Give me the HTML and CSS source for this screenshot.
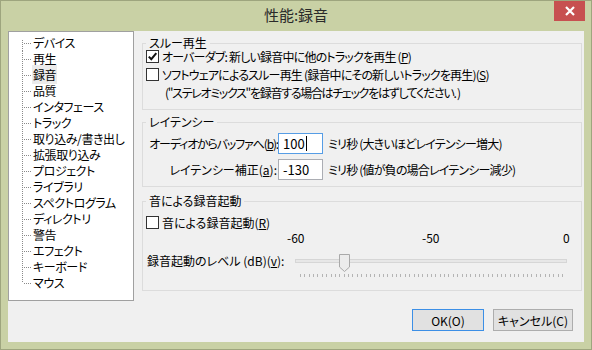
FILE: index.html
```html
<!DOCTYPE html>
<html lang="ja">
<head>
<meta charset="utf-8">
<title>性能:録音</title>
<link rel="stylesheet" href="styles.css">
</head>
<body>
<div class="window">
  <div class="titlebar">
    <div class="title">性能:録音</div>
    <div class="close"><svg width="10" height="10" viewBox="0 0 10 10"><path d="M1 1L9 9M9 1L1 9" stroke="#fff" stroke-width="2.2"/></svg></div>
  </div>
  <div class="client">
    <div class="main">
      <ul class="tree">
        <li>デバイス</li>
        <li>再生</li>
        <li><span class="sel">録音</span></li>
        <li>品質</li>
        <li>インタフェース</li>
        <li>トラック</li>
        <li>取り込み/書き出し</li>
        <li>拡張取り込み</li>
        <li>プロジェクト</li>
        <li>ライブラリ</li>
        <li>スペクトログラム</li>
        <li>ディレクトリ</li>
        <li>警告</li>
        <li>エフェクト</li>
        <li>キーボード</li>
        <li>マウス</li>
      </ul>
      <div class="pane">
        <fieldset class="group g1">
          <legend>スルー再生</legend>
          <div class="rows">
            <div class="row long"><span class="cb"><svg width="11" height="11" viewBox="0 0 11 11"><path d="M1.8 5.6L4.3 8.2L9.3 2.2" fill="none" stroke="#111" stroke-width="2"/></svg></span>オーバーダブ: 新しい録音中に他のトラックを再生 (<u>P</u>)</div>
            <div class="row long"><span class="cb"></span>ソフトウェアによるスルー再生 (録音中にその新しいトラックを再生)(<u>S</u>)</div>
            <div class="row note">("ステレオミックス"を録音する場合はチェックをはずしてください. )</div>
          </div>
        </fieldset>
        <fieldset class="group g2">
          <legend>レイテンシー</legend>
          <div class="field">
            <span class="flabel tight">オーディオからバッファへ(<u>b</u>):</span>
            <span class="box focus">100<span class="caret"></span></span>
            <span class="after">ミリ秒 (大きいほどレイテンシー増大)</span>
          </div>
          <div class="field">
            <span class="flabel">レイテンシー補正(<u>a</u>):</span>
            <span class="box">-130</span>
            <span class="after">ミリ秒 (値が負の場合レイテンシー減少)</span>
          </div>
        </fieldset>
        <fieldset class="group g3">
          <legend>音による録音起動</legend>
          <div class="row"><span class="cb"></span>音による録音起動(<u>R</u>)</div>
          <div class="scale"><span class="s1">-60</span><span class="s2">-50</span><span>0</span></div>
          <div class="sliderrow">
            <span class="slabel">録音起動のレベル (dB)(<u>v</u>):</span>
            <div class="slider">
              <div class="track"></div>
              <div class="ticks"></div>
              <svg class="thumb" width="11" height="18" viewBox="0 0 11 18"><path d="M0.5 0.5H10.5V13L5.5 17.5L0.5 13Z" fill="#ececec" stroke="#a9a9a9"/></svg>
            </div>
          </div>
        </fieldset>
      </div>
    </div>
    <div class="actions">
      <div class="btn default">OK(O)</div>
      <div class="btn cancel">キャンセル(C)</div>
    </div>
  </div>
</div>
</body>
</html>
```
FILE: styles.css
```css
html, body {
  margin: 0;
  padding: 0;
  background: #c9d1a5;
}
body {
  font-family: "Noto Sans CJK JP", "Noto Sans", sans-serif;
  font-size: 12px;
  color: #000;
  font-feature-settings: "palt";
}
.window {
  width: 590px;
  height: 348px;
  border: 1px solid #9ea57e;
  background: #c9d1a5;
  position: relative;
}
.titlebar {
  height: 30px;
  display: flex;
  justify-content: center;
  align-items: center;
  box-sizing: border-box;
  padding-bottom: 2px;
}
.title {
  font-size: 15px;
  color: #2a2a2a;
  line-height: 18px;
}
.close {
  position: absolute;
  top: 0;
  right: 6px;
  width: 31px;
  height: 20px;
  background: #c75050;
  display: flex;
  align-items: center;
  justify-content: center;
}
.client {
  margin-left: 7px;
  width: 576px;
  height: 311px;
  background: #f0f0f0;
  display: flex;
  flex-direction: column;
}
.main {
  display: flex;
  height: 270px;
}
.tree {
  width: 124px;
  height: 265px;
  margin: 0;
  padding: 3px 0 0 0;
  list-style: none;
  border: 1px solid #a0a0a0;
  background: #fff;
}
.tree li {
  position: relative;
  height: 16px;
  line-height: 16px;
  padding-left: 24px;
  white-space: nowrap;
  letter-spacing: -0.4px;
}
.tree li::before {
  content: "";
  position: absolute;
  left: 13px;
  top: 0;
  bottom: 0;
  width: 1px;
  background: repeating-linear-gradient(to bottom, #8a8a8a 0 1px, transparent 1px 2px);
}
.tree li:first-child::before { top: 5px; }
.tree li:last-child::before { bottom: 8px; }
.tree li::after {
  content: "";
  position: absolute;
  left: 15px;
  top: 8px;
  width: 8px;
  height: 1px;
  background: repeating-linear-gradient(to right, #8a8a8a 0 1px, transparent 1px 2px);
}
.sel {
  background: #ebebeb;
  margin-left: -1px;
  padding: 1px 1px;
}
.pane {
  padding: 5px 0 0 8px;
  width: 440px;
  display: flex;
  flex-direction: column;
}
.group {
  margin: 0;
  min-width: 0;
  border: 1px solid #dcdcdc;
  padding: 0 6px 8px 3px;
}
.group legend {
  padding: 0 3px;
  margin-left: 0;
  line-height: 14px;
  height: 14px;
}
.g2 { margin-top: 5px; padding-top: 4px; padding-bottom: 6px; }
.g3 { margin-top: 7px; padding-top: 5px; padding-bottom: 10px; }
.rows { margin-top: -3px; }
.row {
  height: 18px;
  display: flex;
  align-items: center;
  white-space: nowrap;
}
.row.long { letter-spacing: -0.8px; }
.note { padding-left: 19px; letter-spacing: -1.3px; }
.cb {
  width: 11px;
  height: 11px;
  border: 1px solid #333;
  background: #fff;
  margin-right: 3px;
  display: flex;
  align-items: center;
  justify-content: center;
  flex: none;
}
.field {
  display: flex;
  align-items: center;
  height: 21px;
  white-space: nowrap;
}
.field + .field { margin-top: 5px; }
.flabel {
  width: 132px;
  text-align: right;
  flex: none;
  padding-right: 1px;
  box-sizing: border-box;
}
.flabel.tight {
  letter-spacing: -1.15px;
  padding-right: 0;
}
.box {
  width: 45px;
  height: 21px;
  box-sizing: border-box;
  border: 1px solid #abadb3;
  background: #fff;
  padding-left: 4px;
  display: flex;
  align-items: center;
  font-size: 13px;
}
.box.focus { border-color: #569de5; }
.caret {
  width: 1px;
  height: 15px;
  background: #000;
  margin-left: 1px;
}
.after { margin-left: 5px; letter-spacing: -0.8px; }
.scale {
  display: flex;
  height: 14px;
  line-height: 14px;
  padding-left: 141px;
}
.s1 { width: 135px; flex: none; }
.s2 { width: 141px; flex: none; }
.sliderrow {
  display: flex;
  margin-top: 7px;
  height: 28px;
}
.slabel {
  width: 148px;
  padding-left: 1px;
  flex: none;
  line-height: 16px;
  margin-top: 1px;
  white-space: nowrap;
}
.slider {
  position: relative;
  width: 272px;
  height: 28px;
}
.track {
  position: absolute;
  left: 0;
  right: 0;
  top: 7px;
  height: 2px;
  border: 1px solid #d6d6d6;
  background: #e7e7e7;
}
.ticks {
  position: absolute;
  left: 5px;
  top: 22px;
  width: 263px;
  height: 3px;
  background: repeating-linear-gradient(to right, #b4b4b4 0 1px, transparent 1px 4.367px);
}
.thumb {
  position: absolute;
  left: 44px;
  top: 2px;
}
.actions {
  display: flex;
  justify-content: flex-end;
  gap: 9px;
  padding: 8px 11px 0 0;
}
.btn {
  height: 22px;
  box-sizing: border-box;
  border: 1px solid #adadad;
  background: #e1e1e1;
  display: flex;
  align-items: center;
  justify-content: center;
}
.default { width: 72px; border-color: #3c8fe6; }
.cancel { width: 80px; }
```
